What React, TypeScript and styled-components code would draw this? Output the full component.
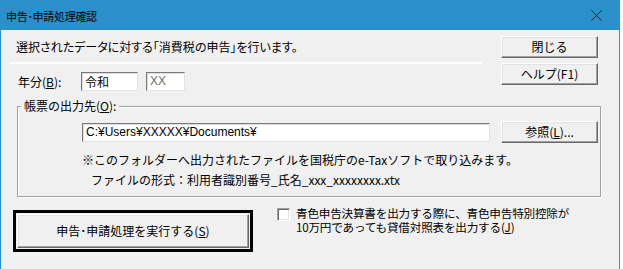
import styled, { createGlobalStyle } from 'styled-components'

const GlobalStyle = createGlobalStyle`
  html, body {
    margin: 0;
    padding: 0;
    background: #ffffff;
  }
  body {
    font-family: "Noto Sans CJK JP", "Noto Sans", sans-serif;
    font-size: 12px;
    color: #000;
  }
`

const Window = styled.div`
  width: 620px;
  height: 269px;
  border: 1px solid #2b90c9;
  border-bottom: none;
  box-sizing: border-box;
  display: flex;
  flex-direction: column;
  background: #f0f0f0;
`

const TitleBar = styled.div`
  height: 29px;
  flex: none;
  background: #2b90c9;
  display: flex;
  align-items: center;
  justify-content: space-between;
  padding: 0 0 0 5px;
`

const Title = styled.span`
  font-size: 11px;
  color: #000;
  letter-spacing: -0.3px;
`

const CloseBox = styled.div`
  width: 46px;
  height: 29px;
  display: flex;
  align-items: center;
  justify-content: center;
`

const Body = styled.div`
  flex: 1;
  padding: 6px 21px 0 9px;
  display: flex;
  flex-direction: column;
`

const TopRow = styled.div`
  display: flex;
  justify-content: space-between;
`

const LeftCol = styled.div`
  width: 472px;
  display: flex;
  flex-direction: column;
`

const Message = styled.div`
  margin-top: 4px;
  line-height: 14px;
  font-size: 12px;
  font-feature-settings: "palt";
  padding-left: 6px;
`

const Separator = styled.div`
  margin-top: 8px;
  height: 2px;
  background: #ffffff;
`

const YearRow = styled.div`
  margin-top: 8px;
  display: flex;
  align-items: center;
  padding-left: 8px;
  gap: 8px;
`

const Label = styled.span`
  width: 55px;
  line-height: 14px;
`

const TextBox = styled.div<{ $w: number; $muted?: boolean }>`
  width: ${p => p.$w}px;
  height: 19px;
  box-sizing: border-box;
  background: #fff;
  border: 1px solid;
  border-color: #7a7a7a #e3e3e3 #e3e3e3 #7a7a7a;
  box-shadow: inset 1px 1px 0 #dcdcdc;
  padding: 1px 0 0 3px;
  line-height: 15px;
  font-family: "Liberation Sans", "Noto Sans CJK JP", sans-serif;
  font-size: 12px;
  color: ${p => (p.$muted ? '#6d6d6d' : '#000')};
  white-space: nowrap;
`

const JpText = styled.span`
  font-family: "Noto Sans CJK JP", sans-serif;
`

const RightCol = styled.div`
  display: flex;
  flex-direction: column;
  gap: 5px;
`

const Button = styled.button`
  width: 97px;
  height: 22px;
  padding: 0;
  box-sizing: border-box;
  background: #f0f0f0;
  border: 1px solid;
  border-color: #ffffff #696969 #696969 #ffffff;
  box-shadow: inset -1px -1px 0 #a0a0a0, inset 1px 1px 0 #e3e3e3;
  font-family: "Noto Sans CJK JP", sans-serif;
  font-size: 12px;
  color: #000;
  line-height: 14px;
`

const Group = styled.fieldset`
  margin: 8px 0 0 7px;
  width: 584px;
  height: 98px;
  box-sizing: border-box;
  padding: 8px 0 0 0;
  border: 1px solid #a0a0a0;
  box-shadow: 1px 1px 0 #fff, inset 1px 1px 0 #fff;
  display: flex;
  flex-direction: column;
`

const Legend = styled.legend`
  margin-left: 3px;
  padding: 0 3px 0 3px;
  line-height: 14px;
  font-size: 12px;
`

const PathRow = styled.div`
  display: flex;
  align-items: center;
  padding-left: 64px;
  gap: 11px;
`

const Note = styled.div<{ $indent: number; $gap: number }>`
  margin-top: ${p => p.$gap}px;
  padding-left: ${p => p.$indent}px;
  line-height: 14px;
  font-size: 12px;
`

const BottomRow = styled.div`
  margin-top: 11px;
  display: flex;
  align-items: flex-start;
  padding-left: 3px;
`

const DefaultFrame = styled.div`
  width: 240px;
  height: 42px;
  margin-top: 2px;
  box-sizing: border-box;
  border: 3px solid #000;
  display: flex;
  padding: 1px;
  background: #f0f0f0;
`

const BigButton = styled(Button)`
  width: 100%;
  height: 100%;
  font-size: 12px;
`

const CheckWrap = styled.label`
  margin-left: 24px;
  display: flex;
  align-items: flex-start;
  gap: 6px;
`

const Check = styled.span`
  width: 13px;
  height: 13px;
  box-sizing: border-box;
  background: #fff;
  border: 1px solid;
  border-color: #a0a0a0 #fff #fff #a0a0a0;
  box-shadow: inset 1px 1px 0 #696969, inset -1px -1px 0 #e3e3e3;
  flex: none;
`

const CheckText = styled.span`
  display: flex;
  flex-direction: column;
  gap: 1px;
  font-size: 11.6px;
  line-height: 13px;
  letter-spacing: -0.2px;
  margin-top: -1px;
`

const CloseIcon = () => (
  <svg width="11" height="11" viewBox="0 0 11 11">
    <path d="M0.5 0.5 L10.5 10.5 M10.5 0.5 L0.5 10.5" stroke="#1a1a1a" strokeWidth="1" />
  </svg>
)

export default function App() {
  return (
    <>
      <GlobalStyle />
      <Window>
        <TitleBar>
          <Title>申告･申請処理確認</Title>
          <CloseBox>
            <CloseIcon />
          </CloseBox>
        </TitleBar>
        <Body>
          <TopRow>
            <LeftCol>
              <Message>選択されたデータに対する「消費税の申告」を行います。</Message>
              <Separator />
              <YearRow>
                <Label>年分(<u>B</u>):</Label>
                <TextBox $w={57}><JpText>令和</JpText></TextBox>
                <TextBox $w={39} $muted>XX</TextBox>
              </YearRow>
            </LeftCol>
            <RightCol>
              <Button>閉じる</Button>
              <Button>ヘルプ(F1)</Button>
            </RightCol>
          </TopRow>
          <Group>
            <Legend>帳票の出力先(<u>O</u>):</Legend>
            <PathRow>
              <TextBox $w={408}>C:¥Users¥XXXXX¥Documents¥</TextBox>
              <Button>参照(<u>L</u>)...</Button>
            </PathRow>
            <Note $indent={64} $gap={10}>
              ※このフォルダーへ出力されたファイルを国税庁のe-Taxソフトで取り込みます。
            </Note>
            <Note $indent={73} $gap={6}>
              ファイルの形式：利用者識別番号_氏名_xxx_xxxxxxxx.xtx
            </Note>
          </Group>
          <BottomRow>
            <DefaultFrame>
              <BigButton>申告･申請処理を実行する(<u>S</u>)</BigButton>
            </DefaultFrame>
            <CheckWrap>
              <Check />
              <CheckText>
                <span>青色申告決算書を出力する際に、青色申告特別控除が</span>
                <span>10万円であっても貸借対照表を出力する(<u>J</u>)</span>
              </CheckText>
            </CheckWrap>
          </BottomRow>
        </Body>
      </Window>
    </>
  )
}
